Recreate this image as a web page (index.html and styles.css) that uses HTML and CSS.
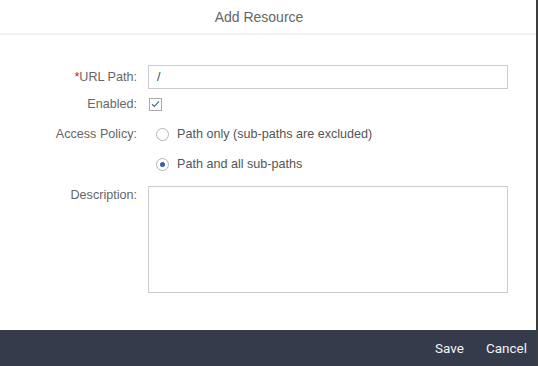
FILE: index.html
```html
<!DOCTYPE html>
<html lang="en">
<head>
    <meta charset="UTF-8">
    <meta name="viewport" content="width=device-width, initial-scale=1.0">
    <title>Add Resource</title>
    <link rel="stylesheet" href="styles.css">
</head>
<body>

    <div class="dialog">
        <div class="dialog-header">Add Resource</div>

        <div class="dialog-body">
            <div class="form-row row-url">
                <label class="form-label"><span class="required">*</span>URL Path:</label>
                <input class="text-input" type="text" value="/">
            </div>

            <div class="form-row row-enabled">
                <label class="form-label">Enabled:</label>
                <span class="checkbox">
                    <svg width="9" height="8" viewBox="0 0 9 8"><path d="M1 4.2 L3.4 6.4 L8 1.4" fill="none" stroke="#4a6cb0" stroke-width="1.3"/></svg>
                </span>
            </div>

            <div class="form-row row-policy">
                <label class="form-label">Access Policy:</label>
                <div class="radio-group">
                    <div class="radio-option">
                        <span class="radio"></span>
                        <span>Path only (sub-paths are excluded)</span>
                    </div>
                    <div class="radio-option">
                        <span class="radio checked"></span>
                        <span>Path and all sub-paths</span>
                    </div>
                </div>
            </div>

            <div class="form-row row-desc">
                <label class="form-label">Description:</label>
                <textarea class="text-area"></textarea>
            </div>
        </div>

        <div class="dialog-footer">
            <button class="footer-button">Save</button>
            <button class="footer-button">Cancel</button>
        </div>
    </div>

</body>
</html>
```

FILE: styles.css
```css
body {
    font-family: 'Liberation Sans', Arial, sans-serif;
    background-color: #fff;
    margin: 0;
    padding: 0;
}

.dialog {
    height: 366px;
    display: flex;
    flex-direction: column;
    border-right: 2px solid #3c3c3c;
    box-sizing: border-box;
}

.dialog-header {
    height: 33px;
    border-bottom: 2px solid #f2f2f2;
    display: flex;
    align-items: center;
    justify-content: center;
    padding-right: 18px;
    font-size: 14px;
    color: #666;
}

.dialog-body {
    flex: 1;
    padding-top: 30px;
}

.form-row {
    display: flex;
    align-items: flex-start;
}

.form-label {
    width: 148px;
    text-align: right;
    padding-right: 11px;
    box-sizing: border-box;
    font-size: 12.6px;
    color: #666;
    flex-shrink: 0;
}

.required {
    color: #c8202c;
}

.row-url {
    align-items: center;
}

.text-input {
    width: 360px;
    height: 24px;
    box-sizing: border-box;
    border: 1px solid #ccc;
    padding: 0 8px;
    font-family: inherit;
    font-size: 12.6px;
    color: #444;
    outline: none;
}

.row-enabled {
    margin-top: 8px;
    align-items: center;
}

.checkbox {
    width: 13px;
    height: 13px;
    margin-left: 1px;
    box-sizing: border-box;
    border: 1px solid #aaa;
    display: flex;
    align-items: center;
    justify-content: center;
}

.row-policy {
    margin-top: 8px;
}

.row-policy .form-label {
    line-height: 30px;
}

.radio-group {
    display: flex;
    flex-direction: column;
}

.radio-option {
    height: 30px;
    display: flex;
    align-items: center;
    padding-left: 8px;
    font-size: 12.6px;
    color: #555;
}

.radio {
    width: 13px;
    height: 13px;
    box-sizing: border-box;
    border: 1px solid #b5b5b5;
    border-radius: 50%;
    margin-right: 8px;
    display: flex;
    align-items: center;
    justify-content: center;
}

.radio.checked::after {
    content: '';
    width: 5px;
    height: 5px;
    border-radius: 50%;
    background-color: #3d5ea6;
}

.row-desc {
    margin-top: 7px;
}

.row-desc .form-label {
    padding-top: 2px;
}

.text-area {
    width: 360px;
    height: 107px;
    box-sizing: border-box;
    border: 1px solid #ccc;
    resize: none;
    outline: none;
}

.dialog-footer {
    height: 36px;
    background-color: #353b4a;
    display: flex;
    justify-content: flex-end;
    align-items: center;
    padding-right: 4px;
}

.footer-button {
    background: none;
    border: none;
    color: #f2f4f7;
    font-family: Roboto, sans-serif;
    font-size: 13.5px;
    padding: 0 5px;
    margin-left: 12px;
    cursor: pointer;
}
```
